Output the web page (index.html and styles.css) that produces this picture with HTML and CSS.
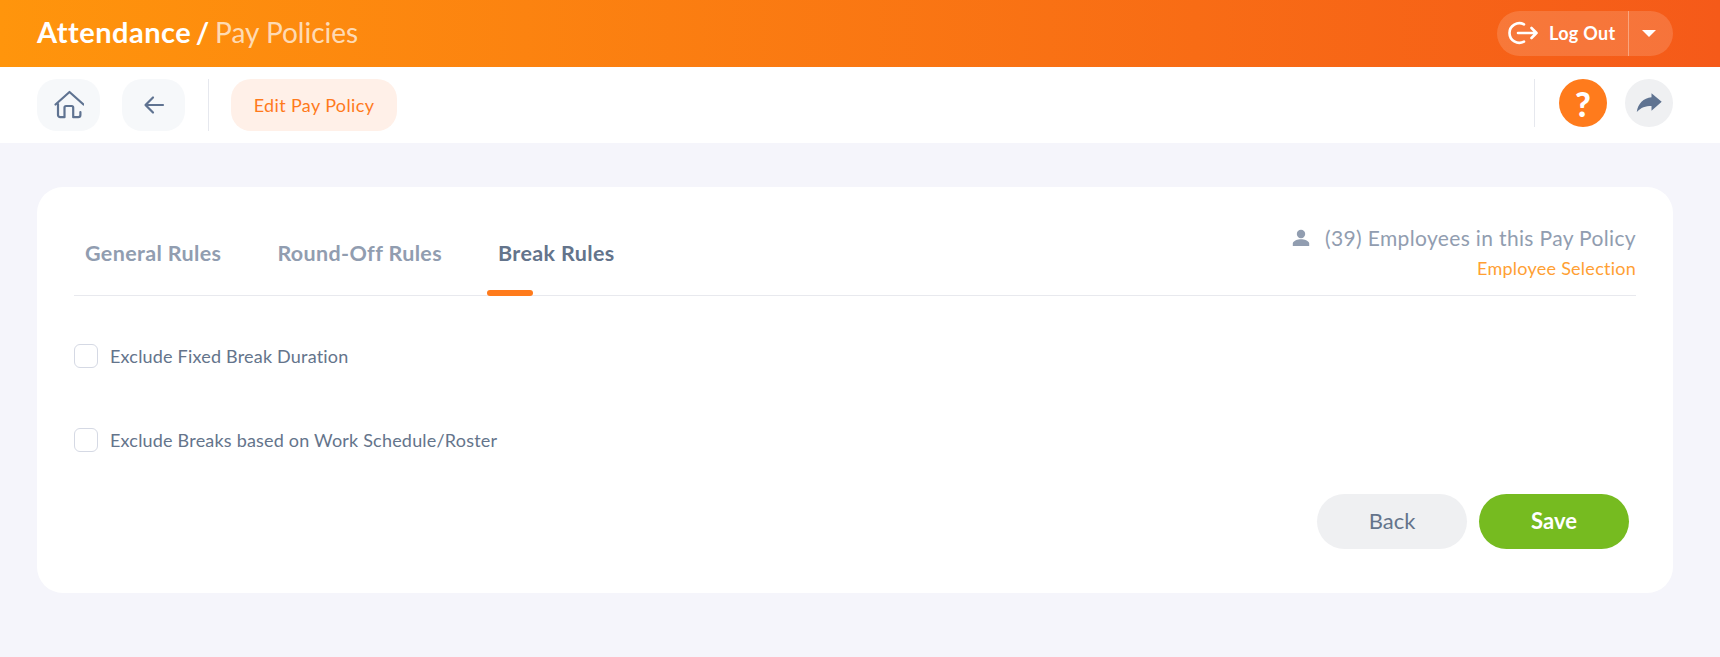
FILE: index.html
```html
<!DOCTYPE html>
<html lang="en">
<head>
    <meta charset="UTF-8">
    <meta name="viewport" content="width=device-width, initial-scale=1.0">
    <title>Pay Policies</title>
    <link rel="stylesheet" href="styles.css">
</head>
<body>
    <header class="top-bar">
        <h1 class="page-title"><span class="page-title-main">Attendance /</span> <span class="page-title-sub">Pay Policies</span></h1>
        <div class="logout-group">
            <button class="logout-btn">
                <svg class="logout-icon" width="32" height="26" viewBox="0 0 32 26" fill="none" stroke="#fff" stroke-width="2.600" stroke-linecap="round" stroke-linejoin="round">
                    <path d="M16 4.400A9.800 9.800 0 1 0 16 21.600"/>
                    <path d="M10 13h18.500M23.500 8l5 5-5 5"/>
                </svg>
                Log Out
            </button>
            <button class="logout-caret"><span class="caret"></span></button>
        </div>
    </header>

    <nav class="tool-bar">
        <button class="tool-btn">
            <svg width="30" height="30" viewBox="0 0 30 30" fill="none" stroke="#5f7391" stroke-width="2.200" stroke-linecap="round" stroke-linejoin="round">
                <path d="M4 14v11a2.200 2.200 0 0 0 2.200 2.200h4.300V17.500a1.500 1.500 0 0 1 1.500-1.500h5.700a1.500 1.500 0 0 1 1.500 1.500v9.700h5a2.200 2.200 0 0 0 2.200-2.200v-3"/>
                <path d="M1.500 14.500L15.500 2l14 12.500"/>
            </svg>
        </button>
        <button class="tool-btn tool-btn-last">
            <svg width="22" height="22" viewBox="0 0 22 22" fill="none" stroke="#5f7391" stroke-width="2.200" stroke-linecap="round" stroke-linejoin="round">
                <path d="M20 11H3M10 3.500L2.500 11l7.500 7.500"/>
            </svg>
        </button>
        <span class="tool-divider"></span>
        <button class="edit-pill">Edit Pay Policy</button>
        <span class="tool-divider tool-divider-right"></span>
        <button class="round-btn round-help">?</button>
        <button class="round-btn round-share">
            <svg width="26" height="24" viewBox="0 0 26 24">
                <path fill="#5f7391" d="M15.500 2.300L25.700 10.700 15.500 19.700V15C9.500 15 5 16.500 0.800 21 1.800 13 7.500 6.800 15.500 6.300z"/>
            </svg>
        </button>
    </nav>

    <main class="content">
        <section class="card">
            <div class="tabs-row">
                <div class="tabs">
                    <a class="tab">General Rules</a>
                    <a class="tab">Round-Off Rules</a>
                    <a class="tab tab-active">Break Rules</a>
                </div>
                <div class="employee-info">
                    <div class="employee-count">
                        <svg width="18" height="18" viewBox="0 0 18 18">
                            <circle cx="9" cy="5" r="4.200" fill="#919db0"/>
                            <path fill="#919db0" d="M0.800 17v-2.500c0-2.800 5.300-4.300 8.200-4.300s8.200 1.500 8.200 4.300V17z"/>
                        </svg>
                        <span>(39) Employees in this Pay Policy</span>
                    </div>
                    <a class="employee-link">Employee Selection</a>
                </div>
            </div>

            <label class="check-row">
                <span class="check-box"></span>
                Exclude Fixed Break Duration
            </label>
            <label class="check-row">
                <span class="check-box"></span>
                Exclude Breaks based on Work Schedule/Roster
            </label>

            <div class="form-actions">
                <button class="action-btn action-back">Back</button>
                <button class="action-btn action-save">Save</button>
            </div>
        </section>
    </main>
</body>
</html>
```

FILE: styles.css
```css
* {
    box-sizing: border-box;
}

body {
    margin: 0;
    height: 657px;
    overflow: hidden;
    background: #f5f5fb;
    font-family: 'Lato', 'Open Sans', sans-serif;
    color: #64748b;
}

button {
    font-family: inherit;
    border: none;
    cursor: pointer;
    padding: 0;
}

.top-bar {
    height: 67px;
    padding: 0 47px 0 37px;
    display: flex;
    align-items: center;
    justify-content: space-between;
    background: linear-gradient(90deg, #ff950c 0%, #f55a19 100%);
}

.page-title {
    margin: 0 0 4px;
    font-size: 28px;
    font-weight: 400;
    color: #fff;
    white-space: nowrap;
}

.page-title-main {
    font-size: 29px;
    font-weight: 700;
    letter-spacing: 0.5px;
    word-spacing: -3px;
}

.page-title-sub {
    margin-left: -2px;
    color: rgba(255, 255, 255, 0.7);
}

.logout-group {
    width: 176px;
    height: 45px;
    display: flex;
    border-radius: 23px;
    background: rgba(255, 255, 255, 0.15);
}

.logout-btn {
    width: 132px;
    padding-left: 11px;
    display: flex;
    align-items: center;
    gap: 9px;
    background: none;
    color: #fff;
    font-size: 18px;
    font-weight: 700;
    letter-spacing: 0.3px;
    padding-bottom: 2px;
    border-right: 1px solid rgba(255, 255, 255, 0.35);
}

.logout-caret {
    flex: 1;
    padding-right: 4px;
    background: none;
    display: flex;
    align-items: center;
    justify-content: center;
}

.caret {
    width: 0;
    height: 0;
    border-left: 7px solid transparent;
    border-right: 7px solid transparent;
    border-top: 7px solid #fff;
}

.tool-bar {
    height: 76px;
    padding: 12px 47px 0 37px;
    display: flex;
    align-items: flex-start;
    background: #fff;
}

.tool-btn {
    width: 63px;
    height: 52px;
    margin-right: 22px;
    border-radius: 20px;
    background: #f6f8fa;
    display: flex;
    align-items: center;
    justify-content: center;
}

.tool-btn-last {
    margin-right: 23px;
}

.tool-divider {
    width: 1px;
    height: 52px;
    background: #e6e8ee;
}

.edit-pill {
    width: 166px;
    height: 52px;
    margin-left: 22px;
    border-radius: 20px;
    background: #fff0e8;
    color: #ff7a1c;
    font-size: 18px;
    letter-spacing: 0.37px;
}

.tool-divider-right {
    height: 48px;
    margin-left: auto;
}

.round-btn {
    width: 48px;
    height: 48px;
    border-radius: 50%;
    display: flex;
    align-items: center;
    justify-content: center;
}

.round-help {
    margin-left: 24px;
    background: #ff7b1c;
    color: #fff;
    font-size: 34px;
    font-weight: 900;
}

.round-share {
    margin-left: 18px;
    background: #eff0f2;
}

.content {
    padding: 44px 47px 0 37px;
}

.card {
    height: 406px;
    padding: 0 37px;
    border-radius: 26px;
    background: #fff;
    display: flex;
    flex-direction: column;
}

.tabs-row {
    height: 109px;
    display: flex;
    justify-content: space-between;
    border-bottom: 1px solid #e8e9ee;
}

.tabs {
    display: flex;
    gap: 34px;
    padding-top: 53px;
}

.tab {
    position: relative;
    padding: 0 11px;
    font-size: 21.500px;
    font-weight: 700;
    letter-spacing: 0.36px;
    color: #919db0;
}

.tab-active {
    height: 56px;
    color: #64748b;
}

.tab-active::after {
    content: "";
    position: absolute;
    left: 0;
    bottom: 0;
    width: 46px;
    height: 6px;
    border-radius: 3px;
    background: #ff7b1c;
}

.employee-info {
    padding-top: 38px;
    text-align: right;
}

.employee-count {
    display: flex;
    align-items: center;
    gap: 15px;
    font-size: 21px;
    letter-spacing: 0.35px;
    color: #919db0;
}

.employee-link {
    display: block;
    margin-top: 7px;
    font-size: 18px;
    letter-spacing: 0.25px;
    color: #ffa033;
}

.check-row {
    display: flex;
    align-items: center;
    gap: 12px;
    margin-top: 48px;
    font-size: 18px;
    letter-spacing: 0.2px;
    height: 24px;
}

.check-row + .check-row {
    margin-top: 60px;
}

.check-box {
    width: 24px;
    height: 24px;
    border: 1px solid #d5d9e4;
    border-radius: 6px;
    background: #fff;
}

.form-actions {
    margin-top: 42px;
    padding-right: 7px;
    display: flex;
    justify-content: flex-end;
    gap: 12px;
}

.action-btn {
    width: 150px;
    height: 55px;
    padding-bottom: 3px;
    border-radius: 28px;
    font-size: 22px;
}

.action-back {
    background: #eff0f2;
    color: #64748b;
}

.action-save {
    background: #76bb20;
    color: #fff;
    font-weight: 700;
}
```
